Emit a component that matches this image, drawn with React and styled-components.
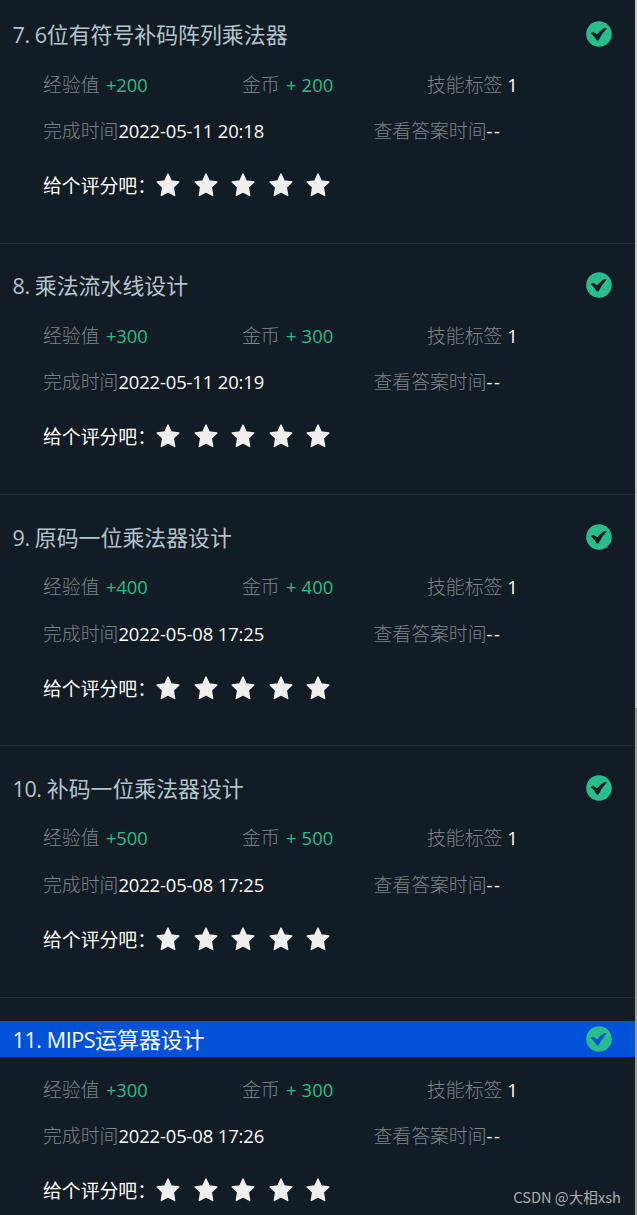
import React from 'react'
import styled, { createGlobalStyle } from 'styled-components';

const GlobalStyle = createGlobalStyle`
	body {
		margin: 0;
		background: #121c24;
		overflow: hidden;
	}
`;

const Root = styled('div')`
	position: relative;
	display: flex;
	width: 637px;
	height: 1215px;
	overflow: hidden;
	background: #121c24;
	font-family: 'Open Sans', 'Noto Sans CJK SC', sans-serif;
`;

const List = styled('div')`
	flex: 1;
	margin-top: -7.5px;
`;

const Item = styled('div')`
	box-sizing: border-box;
	height: 251.25px;
	padding-top: 23.5px;
	border-bottom: 1px solid #242e35;
`;

const Title = styled('div')`
	box-sizing: border-box;
	display: flex;
	align-items: center;
	justify-content: space-between;
	height: 36px;
	margin-bottom: 9px;
	padding: 0 23px 0 12.5px;
	background: ${p => p.$active ? '#0152d9' : 'transparent'};
	color: ${p => p.$active ? '#fff' : '#b4c4ce'};
	font-size: 21.9px;
	line-height: 36px;
	white-space: pre;
`;

const TitleText = styled('span')`
	padding-top: 2.4px;
`;

const Latin = styled('span')`
	font-size: 21.5px;
	letter-spacing: -0.4px;
`;

const Row = styled('div')`
	display: grid;
	grid-template-columns: ${p => p.$columns};
	align-items: center;
	box-sizing: border-box;
	height: 46.5px;
	padding: 0.5px 0 0 43px;
	font-size: 18.85px;
	line-height: 28px;
	white-space: pre;
`;

const Label = styled('span')`
	margin-right: ${p => p.$gap || 0}px;
	color: #7c848a;
	font-weight: 300;
`;

const Value = styled('span')`
	color: ${p => p.$green ? '#29bd8b' : '#fff'};
	font-size: 18.4px;
	letter-spacing: ${p => p.$spacing || -0.12}px;
`;

const Rating = styled('div')`
	display: flex;
	align-items: center;
	height: 62.4px;
	padding-left: 43px;
	color: #fff;
	font-size: 18.85px;
	white-space: pre;
`;

const RatingText = styled('span')`
	width: 113.2px;
`;

const Stars = styled('div')`
	display: flex;
	gap: 13.5px;
`;

const Scrollbar = styled('div')`
	width: 2px;
	background: #c5cec5;
`;

const Thumb = styled('div')`
	height: 507px;
	margin-top: 708px;
	background: #a09f9e;
`;

const Watermark = styled('div')`
	position: absolute;
	right: 16px;
	bottom: 8px;
	color: #a9adb0;
	font: 14.65px/20px 'Noto Sans CJK SC', sans-serif;
`;

const Check = () => (
	<svg width="26" height="26" viewBox="0 0 26 26">
		<path
			fill="#28bd8b"
			fillRule="evenodd"
			d="M13 .2a12.8 12.8 0 1 0 0 25.6A12.8 12.8 0 0 0 13 .2zM4.800 12L7.300 10.800 11 13.300Q14.500 9.400 18 7.200L21 7.200Q15.500 12.600 12.500 19.500L10.800 19.500Q8.300 15.300 4.800 12z"
		/>
	</svg>
);

const Star = () => (
	<svg width="24" height="24" viewBox="0 0 24 24">
		<path
			fill="#efefef"
			stroke="#efefef"
			strokeWidth="1.4"
			strokeLinejoin="round"
			d="M12 1.100l3.200 6.900 7.600 1-5.500 5.200 1.400 8.300-6.700-3.600-6.700 3.600 1.400-8.300L1.200 9l7.600-1z"
		/>
	</svg>
);

export default function App() {

	const items = [
		{ no: '7. 6', name: '位有符号补码阵列乘法器', score: 200, time: '2022-05-11 20:18' },
		{ no: '8. ', name: '乘法流水线设计', score: 300, time: '2022-05-11 20:19' },
		{ no: '9. ', name: '原码一位乘法器设计', score: 400, time: '2022-05-08 17:25' },
		{ no: '10. ', name: '补码一位乘法器设计', score: 500, time: '2022-05-08 17:25' },
		{ no: '11. MIPS', name: '运算器设计', score: 300, time: '2022-05-08 17:26', active: true },
	];

	return (
		<Root>
			<GlobalStyle />
			<List>
				{
					items.map((m, i) => (
						<Item key={i}>
							<Title $active={m.active}>
								<TitleText><Latin>{m.no}</Latin>{m.name}</TitleText>
								<Check />
							</Title>
							<Row $columns="199px 185px 1fr">
								<div><Label $gap={1.5}>经验值 </Label><Value $green>+{m.score}</Value></div>
								<div><Label $gap={1.5}>金币 </Label><Value $green $spacing={0.1}>+ {m.score}</Value></div>
								<div><Label>技能标签 </Label><Value>1</Value></div>
							</Row>
							<Row $columns="330.5px 1fr">
								<div><Label>完成时间</Label><Value>{m.time}</Value></div>
								<div><Label>查看答案时间</Label><Value $spacing={1.5}>--</Value></div>
							</Row>
							<Rating>
								<RatingText>给个评分吧：</RatingText>
								<Stars>
									{ [1, 2, 3, 4, 5].map(n => <Star key={n} />) }
								</Stars>
							</Rating>
						</Item>
					))
				}
			</List>
			<Scrollbar>
				<Thumb />
			</Scrollbar>
			<Watermark>CSDN @大相xsh</Watermark>
		</Root>
	)
}
